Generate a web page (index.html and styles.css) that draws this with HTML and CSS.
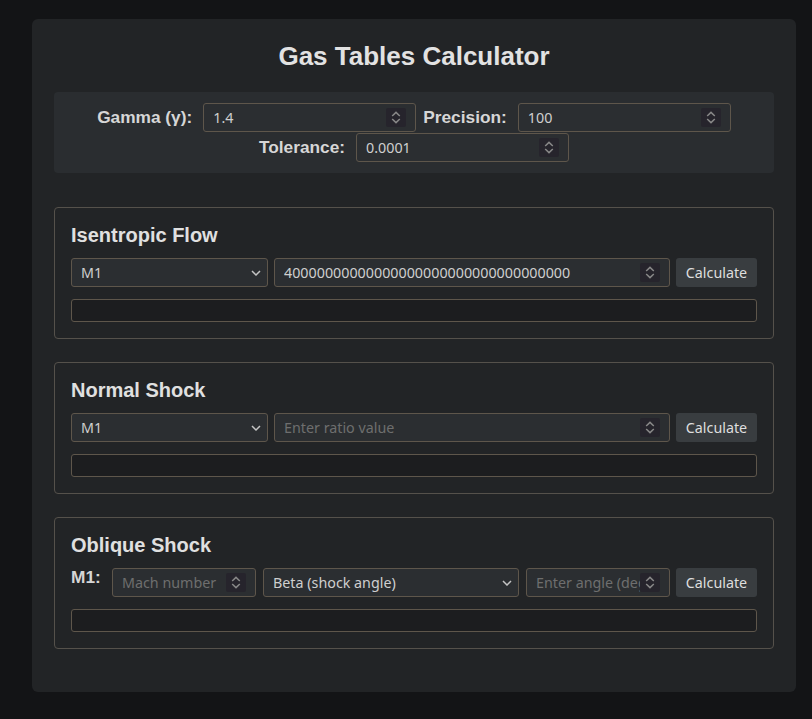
FILE: index.html
```html
<!DOCTYPE html>
<html lang="en">
<head>
<meta charset="utf-8">
<title>Gas Tables Calculator</title>
<link rel="stylesheet" href="styles.css">
</head>
<body>
<div class="container">
  <h1 class="title">Gas Tables Calculator</h1>
  <div class="settings">
    <div class="field">
      <label class="label">Gamma (γ):</label>
      <input class="input number set-input" type="number" value="1.4">
    </div>
    <div class="field">
      <label class="label">Precision:</label>
      <input class="input number set-input" type="number" value="100">
    </div>
    <div class="field">
      <label class="label">Tolerance:</label>
      <input class="input number set-input" type="number" value="0.0001">
    </div>
  </div>

  <section class="card">
    <h2 class="card-title">Isentropic Flow</h2>
    <div class="row">
      <select class="input sel"><option>M1</option></select>
      <input class="input number num" type="number" value="40000000000000000000000000000000000">
      <button class="btn">Calculate</button>
    </div>
    <div class="output"></div>
  </section>

  <section class="card">
    <h2 class="card-title">Normal Shock</h2>
    <div class="row">
      <select class="input sel"><option>M1</option></select>
      <input class="input number num" type="number" placeholder="Enter ratio value">
      <button class="btn">Calculate</button>
    </div>
    <div class="output"></div>
  </section>

  <section class="card">
    <h2 class="card-title">Oblique Shock</h2>
    <div class="row">
      <label class="label m1">M1:</label>
      <input class="input number ob-mach" type="number" placeholder="Mach number">
      <select class="input sel ob-sel"><option>Beta (shock angle)</option></select>
      <input class="input number ob-angle" type="number" placeholder="Enter angle (degrees)">
      <button class="btn">Calculate</button>
    </div>
    <div class="output"></div>
  </section>
</div>
</body>
</html>
```

FILE: styles.css
```css
:root {
  color-scheme: dark;
}
html, body {
  margin: 0;
  background: #131416;
}
body {
  padding: 19px 0 26px 32px;
  font-family: "Liberation Sans", Arial, sans-serif;
  color: #dcdcdc;
}
.container {
  box-sizing: border-box;
  width: 764px;
  background: #222426;
  border-radius: 6px;
  padding: 22px 22px 21px;
}
.title {
  margin: 0 0 21px;
  text-align: center;
  font-size: 26px;
  font-weight: bold;
  line-height: 30px;
  color: #e2e2e2;
}
.settings {
  background: #2a2d30;
  border-radius: 4px;
  padding: 11px 15px;
  display: flex;
  flex-wrap: wrap;
  justify-content: center;
  column-gap: 7px;
  row-gap: 1px;
  margin-bottom: 34px;
}
.field {
  display: flex;
  align-items: center;
}
.label {
  font-family: "Liberation Sans", Arial, sans-serif;
  font-weight: bold;
  font-size: 17.3px;
  color: #d6d6d6;
  margin-right: 11px;
  white-space: nowrap;
}
.input {
  box-sizing: border-box;
  height: 29px;
  background-color: #2b2e31;
  border: 1px solid #5e564b;
  border-radius: 3px;
  color: #cfcfcf;
  font-family: "Noto Sans", "Open Sans", sans-serif;
  font-size: 14.3px;
  padding: 0 9px;
  margin: 0;
  min-width: 0;
  outline: none;
  flex: none;
}
.input::placeholder {
  color: #6e6e6e;
}
.number {
  appearance: textfield;
  -moz-appearance: textfield;
  padding-right: 29px;
  background-image: url("data:image/svg+xml,%3Csvg xmlns='http://www.w3.org/2000/svg' width='20' height='19' viewBox='0 0 20 19'%3E%3Crect width='20' height='19' rx='2' fill='%2326242c'/%3E%3Cpath d='M6.2 8l3.8-3.6L13.8 8M6.2 11l3.8 3.6 3.8-3.6' fill='none' stroke='%23868686' stroke-width='1.5'/%3E%3C/svg%3E");
  background-repeat: no-repeat;
  background-position: right 9px center;
  background-size: 20px 19px;
}
.number::-webkit-inner-spin-button,
.number::-webkit-outer-spin-button {
  -webkit-appearance: none;
  margin: 0;
}
.set-input {
  width: 213px;
}
.card {
  border: 1px solid #55514b;
  border-radius: 4px;
  padding: 16px;
  margin-bottom: 23px;
}
.card:last-child {
  margin-bottom: 22px;
}
.card-title {
  margin: 0 0 11px;
  font-size: 20px;
  line-height: 23px;
  font-weight: bold;
  color: #e0e0e0;
}
.row {
  display: flex;
  align-items: flex-start;
  gap: 6px;
  margin-bottom: 12px;
}
.sel {
  appearance: none;
  -webkit-appearance: none;
  background-image: url("data:image/svg+xml,%3Csvg xmlns='http://www.w3.org/2000/svg' width='10' height='6' viewBox='0 0 10 6'%3E%3Cpath d='M1 1l4 4 4-4' fill='none' stroke='%23c4c4c4' stroke-width='1.5'/%3E%3C/svg%3E");
  background-repeat: no-repeat;
  background-position: right 6px center;
  background-size: 10px 6px;
  width: 197px;
}
.num {
  width: 396px;
}
.btn {
  box-sizing: border-box;
  height: 29px;
  width: 81px;
  flex: none;
  background: #393d40;
  border: none;
  border-radius: 3px;
  color: #dedede;
  font-family: "Noto Sans", "Open Sans", sans-serif;
  font-size: 14.3px;
  padding: 0;
}
.m1 {
  width: 30px;
  margin-right: 5px;
  line-height: 18px;
  flex: none;
}
.ob-mach {
  width: 144px;
}
.ob-sel {
  width: 256px;
  margin: 0 1px;
}
.ob-angle {
  width: 144px;
}
.output {
  box-sizing: border-box;
  height: 23.1px;
  background: #1c1d1f;
  border: 1px solid #5e564b;
  border-radius: 3px;
}
```
